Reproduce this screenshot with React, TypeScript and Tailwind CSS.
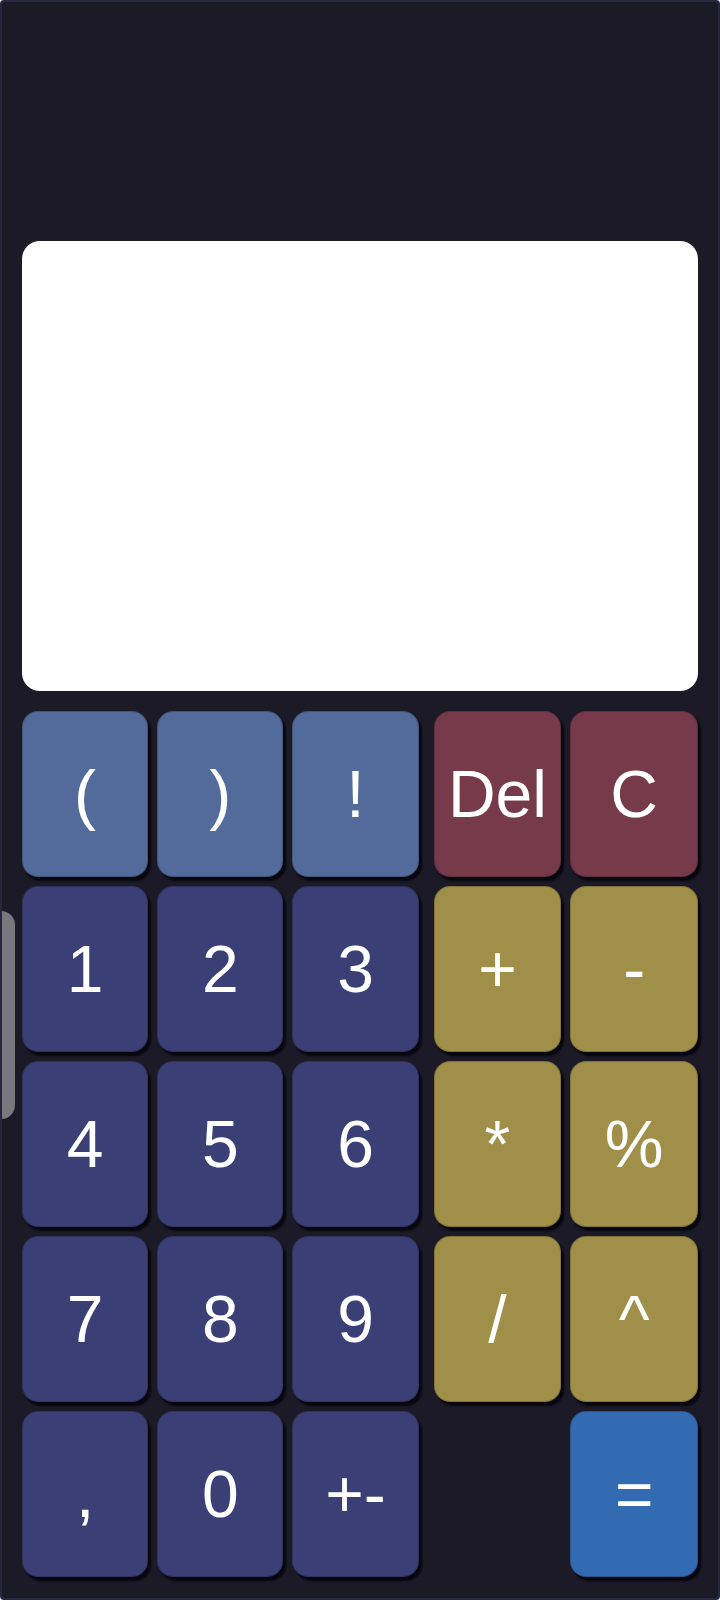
import React from "react";

type Key = { label: string; tone: "paren" | "danger" | "num" | "op" | "eq" } | null;

const tones = {
  paren: "bg-[#526b9b]",
  danger: "bg-[#763a4a]",
  num: "bg-[#3a3f76]",
  op: "bg-[#a08f48]",
  eq: "bg-[#336bb2]",
};

const leftKeys: Key[] = [
  { label: "(", tone: "paren" },
  { label: ")", tone: "paren" },
  { label: "!", tone: "paren" },
  { label: "1", tone: "num" },
  { label: "2", tone: "num" },
  { label: "3", tone: "num" },
  { label: "4", tone: "num" },
  { label: "5", tone: "num" },
  { label: "6", tone: "num" },
  { label: "7", tone: "num" },
  { label: "8", tone: "num" },
  { label: "9", tone: "num" },
  { label: ",", tone: "num" },
  { label: "0", tone: "num" },
  { label: "+-", tone: "num" },
];

const rightKeys: Key[] = [
  { label: "Del", tone: "danger" },
  { label: "C", tone: "danger" },
  { label: "+", tone: "op" },
  { label: "-", tone: "op" },
  { label: "*", tone: "op" },
  { label: "%", tone: "op" },
  { label: "/", tone: "op" },
  { label: "^", tone: "op" },
  null,
  { label: "=", tone: "eq" },
];

const KeyButton = ({ k }: { k: Key }) => {
  if (!k) return <div />;
  return (
    <button
      className={`${tones[k.tone]} flex items-center justify-center rounded-[16px] border border-black/20 text-[66px] leading-none text-white shadow-[3px_4px_2px_rgba(5,4,12,0.85)]`}
    >
      {k.label}
    </button>
  );
};

export default function App() {
  return (
    <div
      className="relative flex h-[1600px] w-[720px] flex-col overflow-hidden rounded-[4px] border-2 border-[#252840] bg-[#1c1a26] px-[20px] pb-[20px] pt-[239px]"
      style={{ fontFamily: '"Liberation Sans", Arial, sans-serif' }}
    >
      {/* Display */}
      <div className="h-[450px] rounded-[18px] bg-white" />

      {/* Keypad */}
      <div className="mt-[20px] flex gap-[15px]">
        <div className="grid flex-[3] grid-cols-3 grid-rows-[repeat(5,166px)] gap-[9px]">
          {leftKeys.map((k, i) => (
            <KeyButton key={i} k={k} />
          ))}
        </div>
        <div className="grid flex-[2] grid-cols-2 grid-rows-[repeat(5,166px)] gap-[9px]">
          {rightKeys.map((k, i) => (
            <KeyButton key={i} k={k} />
          ))}
        </div>
      </div>

      {/* side handle */}
      <div className="absolute left-[-2px] top-[909px] h-[208px] w-[15px] rounded-r-[14px] bg-[#78777d]" />
    </div>
  );
}
